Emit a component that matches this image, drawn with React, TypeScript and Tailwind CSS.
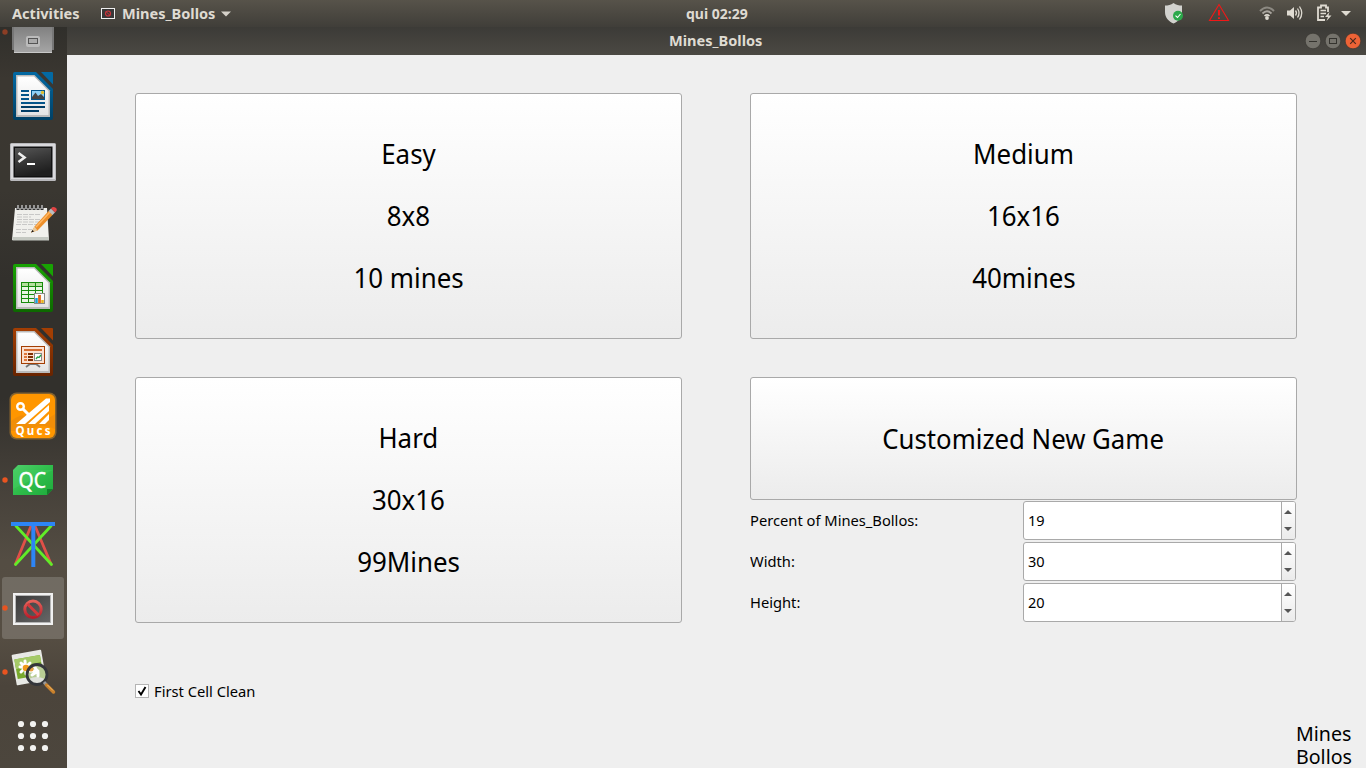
import type { ReactNode } from "react";

function DockItem({ top, label, running, active, children }: { top: number; label: string; running?: boolean; active?: boolean; children: ReactNode }) {
  return (
    <button aria-label={label} className="block h-16 w-[67px] shrink-0">
      <svg width="67" height="64" viewBox={`0 ${top} 67 64`}>
        {active && <rect x="2" y={top + 1} width="62" height="62" rx="3" fill="#fff" fillOpacity=".17" />}
        {running && <circle cx="5" cy={top + 32} r="2.7" fill="#e95420" />}
        {children}
      </svg>
    </button>
  );
}

function Sheet({ y, id, light, dark, children }: { y: number; id: string; light: string; dark: string; children: ReactNode }) {
  return (
    <g transform={`translate(0 ${y})`}>
      <defs>
        <linearGradient id={id} x1="0" y1="0" x2="0" y2="1">
          <stop offset="0" stopColor={light} />
          <stop offset="1" stopColor={dark} />
        </linearGradient>
        <linearGradient id={id + "p"} x1="0" y1="0" x2="0" y2="1">
          <stop offset="0" stopColor="#fff" />
          <stop offset="1" stopColor="#e4e4e4" />
        </linearGradient>
      </defs>
      <path d="M15 0H36L53 17V46Q53 48 51 48H15Q13 48 13 46V2Q13 0 15 0Z" fill={`url(#${id})`} />
      <path d="M16 3H34.5L50 18.5V45H16Z" fill="#bababa" />
      <path d="M17.5 4.5H34L48.500 19V43H17.500Z" fill={`url(#${id}p)`} />
      <path d="M41 0H52Q53 0 53 1V12.500Z" fill={light} />
      {children}
    </g>
  );
}

function Dock() {
  return (
    <nav className="flex h-[741px] w-[67px] shrink-0 flex-col justify-end overflow-hidden bg-[linear-gradient(180deg,#302f2b_0%,#3b3731_7%,#3a3731_22%,#32302c_34%,#32302c_50%,#46413a_62%,#544d43_72%,#564e43_82%,#4b443b_89%,#4c463d_100%)]">
      <DockItem top={0} label="Files">
        <defs>
          <linearGradient id="files" x1="0" y1="0" x2="0" y2="1"><stop stopColor="#777" /><stop offset="1" stopColor="#a5a5a5" /></linearGradient>
        </defs>
        <circle cx="5" cy="32" r="2.700" fill="#8c3e25" />
        <path d="M12 20H54V50H12Z" fill="#777" />
        <path d="M14 20H52V52.500H14Z" fill="url(#files)" />
        <path d="M14 52.500H52" stroke="#c9c9c9" />
        <rect x="26" y="36" width="14" height="11" rx="2" fill="#bbb" />
        <rect x="28.500" y="38.500" width="9" height="5" fill="#aaa" stroke="#555" />
      </DockItem>
      <DockItem top={64} label="Writer">
        <Sheet y={72} id="writer" light="#0369a3" dark="#004065">
          <path d="M21 19H29M21 23H29M21 27H29M21 31H45" stroke="#04558a" strokeWidth="2" />
          <path d="M21 35H45M21 39H39" stroke="#003d66" strokeWidth="2" />
          <rect x="31.500" y="18.500" width="13" height="9" fill="#8fd0f5" stroke="#04558a" />
          <path d="M32 27V25L35.500 20.500L38 24L41 22L44 25V27Z" fill="#444" />
          <circle cx="42.500" cy="20.500" r="1.700" fill="#e2bd2c" />
        </Sheet>
      </DockItem>
      <DockItem top={128} label="Terminal">
        <defs><linearGradient id="term" x1="0" y1="0" x2="0.300" y2="1"><stop stopColor="#555" /><stop offset=".5" stopColor="#383838" /><stop offset="1" stopColor="#1f1f1f" /></linearGradient></defs>
        <rect x="10" y="143" width="46" height="38" rx="1.500" fill="#b9b9bc" />
        <rect x="11" y="144" width="44" height="35" fill="#d9d9dc" />
        <rect x="13.500" y="146.500" width="39" height="31" fill="#111" />
        <rect x="15" y="148" width="36" height="28" fill="url(#term)" />
        <path d="M18.500 153L24.500 157.500L18.500 162" fill="none" stroke="#eee" strokeWidth="2.600" />
        <path d="M27 164H35" stroke="#fff" strokeWidth="2" />
      </DockItem>
      <DockItem top={192} label="Text Editor">
        <path d="M15 208H47L49 240H12Z" fill="#f0f0ec" />
        <path d="M12.500 237H49V240.500H12.500Z" fill="#c4c8c1" />
        <path d="M18 206V210M22 206V210M26 206V210M30 206V210M34 206V210M38 206V210M42 206V210" stroke="#333" strokeWidth="3" />
        <path d="M18 205V209M22 205V209M26 205V209M30 205V209M34 205V209M38 205V209M42 205V209" stroke="#ccc" strokeWidth="1.300" />
        <path d="M17 214.500H40M17 217H31M17 219.500H43M17 222H40M16 224.500H37M16 229.500H32M16 232.500H26" stroke="#c3c3c3" strokeWidth=".9" strokeDasharray="5 1" />
        <path d="M34.500 226.500L49 210.500L53 214.500L37.500 230.500L31 232.500Z" fill="#ed8f29" />
        <path d="M36 227L50 212" stroke="#ffb763" strokeWidth="1.500" />
        <path d="M31 232.500L34.500 226.500L37.500 230.500Z" fill="#e8ca9e" />
        <path d="M31 232.500L32.500 230L34 231.500Z" fill="#111" />
        <path d="M48.500 211L51 208.500L55 212.500L52.500 215Z" fill="#b9bdc0" />
        <path d="M51 208.500Q53 206 56 208Q58 210 55 212.500Z" fill="#e34444" />
      </DockItem>
      <DockItem top={256} label="Calc">
        <Sheet y={264} id="calc" light="#18a303" dark="#0d6800">
          <rect x="21" y="18" width="22" height="21" fill="#178b0c" />
          {[0, 1, 2, 3, 4].map((r) => [0, 1, 2].map((c) => <rect key={`${r}${c}`} x={22 + c * 7} y={19 + r * 4} width="6" height="3" fill={r ? "#e9f5e4" : "#b6df9f"} />))}
          <rect x="34.500" y="29.500" width="10" height="10" fill="#fafafa" stroke="#888" />
          <path d="M36.500 39V34" stroke="#18a0d8" strokeWidth="2.500" />
          <path d="M39.500 39V31" stroke="#e06a16" strokeWidth="2.800" />
          <path d="M42.500 39V36" stroke="#e6b51a" strokeWidth="2.500" />
        </Sheet>
      </DockItem>
      <DockItem top={320} label="Impress">
        <Sheet y={328} id="impress" light="#a33e03" dark="#692400">
          <path d="M26 39L30 36H36L40 39" fill="none" stroke="#777" strokeWidth="1.800" />
          <rect x="21.500" y="18.500" width="23" height="17" fill="#fbe0d0" stroke="#a33e03" />
          <path d="M24 22H42" stroke="#d56c30" strokeWidth="2" />
          <path d="M24 26H27M24 29H27M24 32H27" stroke="#df783c" strokeWidth="2" />
          <path d="M28 26H33M28 29H33M28 32H33" stroke="#812f03" strokeWidth="2" />
          <rect x="34.500" y="25.500" width="7" height="7" fill="#fff" stroke="#888" />
          <path d="M36 31L37.500 29L39 29.500L41 27" fill="none" stroke="#23a044" strokeWidth="1.300" />
        </Sheet>
      </DockItem>
      <DockItem top={384} label="Qucs">
        <rect x="9.500" y="392.500" width="47" height="47" rx="7" fill="#85632f" />
        <rect x="11" y="394" width="44" height="44" rx="6" fill="#ff9600" />
        <path d="M11 421Q23 411 30 419T55 414V429Q40 422 30 431H11Z" fill="#e98b0c" fillOpacity=".65" />
        <circle cx="20.500" cy="406.500" r="3.300" fill="none" stroke="#fff" strokeWidth="2.400" />
        <path d="M23 409L28.500 414.500" stroke="#fff" strokeWidth="3" />
        <path d="M16 424L46 398.500H50V402L25 424Z" fill="#fff" />
        <path d="M28 424L49 405V411L35 424ZM39 424L49 414V420L45 424Z" fill="#fff" />
        <text x="15.500" y="435" textLength="35" lengthAdjust="spacing" fill="#fff" className="font-['Noto_Sans'] text-[11.500px] font-bold">Qucs</text>
      </DockItem>
      <DockItem top={448} label="Qt Creator" running>
        <defs><linearGradient id="qc" x1="0" y1="0" x2="1" y2="1"><stop stopColor="#4fcf6b" /><stop offset=".5" stopColor="#2fbd4b" /><stop offset="1" stopColor="#1fab3c" /></linearGradient></defs>
        <path d="M18 465H53V489L47 495H13V470Z" fill="url(#qc)" />
        <path d="M13 470H53L13 489Z" fill="#45cf62" fillOpacity=".45" />
        <path d="M47 495V489H53Z" fill="#14802b" />
        <text x="18.500" y="487.500" textLength="27.500" lengthAdjust="spacingAndGlyphs" fill="#fff" stroke="#fff" strokeWidth=".4" className="font-['Noto_Sans'] text-[22px]">QC</text>
      </DockItem>
      <DockItem top={512} label="Kig">
        <path d="M31 526L15.500 564M35 526L51 564" stroke="#e05048" strokeWidth="2.800" strokeLinecap="round" />
        <path d="M16 526L51.500 564.500M51 526L15.500 564.500" stroke="#61ec28" strokeWidth="2.800" strokeLinecap="round" />
        <path d="M33.300 526V567" stroke="#2d85f5" strokeWidth="4" />
        <path d="M11 524H55" stroke="#2d85f5" strokeWidth="4.200" />
      </DockItem>
      <DockItem top={576} label="Mines_Bollos" running active>
        <BannedWindow />
      </DockItem>
      <DockItem top={640} label="Image Viewer" running>
        <g transform="rotate(-10 29 668)">
          <rect x="14" y="652" width="30" height="31" rx="1" fill="#e8e9e5" />
          <rect x="16" y="657" width="26" height="20" fill="#78a92c" />
          <path d="M16 657H42V664L16 667Z" fill="#a5ca68" />
        </g>
        <g stroke="#fff" strokeWidth="3" strokeLinecap="round"><path d="M20 667L31 668M21 672L30 663M25 661L26 674M21 663L30 672" /></g>
        <circle cx="26" cy="668" r="3.300" fill="#ef9a1c" />
        <circle cx="37" cy="674.500" r="10" fill="#b8cd95" />
        <path d="M29 679Q36 675 45 679Q41 684 36 684Q31 683 29 679Z" fill="#dfe1dc" />
        <path d="M30 671L37 671M34 666L38 672M32 675L38 671M38 676V672" stroke="#fff" strokeWidth="3" strokeLinecap="round" />
        <circle cx="31" cy="669" r="2.500" fill="#e9a243" />
        <circle cx="37" cy="674.500" r="10" fill="none" stroke="#34363b" strokeWidth="2.800" />
        <path d="M44 682L46.500 685" stroke="#999" strokeWidth="3" />
        <path d="M46.500 685L53.500 692" stroke="#c9812c" strokeWidth="3.500" strokeLinecap="round" />
        <path d="M47.500 685L53 690.500" stroke="#f5bc67" strokeWidth="1" />
      </DockItem>
      <DockItem top={704} label="Show Applications">
        {[724, 736, 748].map((y) => [21, 33, 45].map((x) => <circle key={`${x}-${y}`} cx={x} cy={y} r="3.100" fill="#f2f2f0" />))}
      </DockItem>
    </nav>
  );
}

function BannedWindow() {
  return (
    <>
      <defs>
        <linearGradient id="screen" x1="0" y1="0" x2="1" y2="1"><stop stopColor="#3b3b3b" /><stop offset="1" stopColor="#666" /></linearGradient>
        <linearGradient id="ban" x1="0" y1="0" x2="0" y2="1"><stop stopColor="#e5625a" /><stop offset="1" stopColor="#b81e2b" /></linearGradient>
      </defs>
      <rect x="13" y="593" width="40" height="32" fill="#f1f1f1" />
      <rect x="15" y="595" width="36" height="28" fill="#b5b5b5" />
      <rect x="16" y="596" width="34" height="26" fill="url(#screen)" />
      <circle cx="33" cy="609.300" r="8.200" fill="none" stroke="url(#ban)" strokeWidth="3" />
      <path d="M27.500 604L38.500 615" stroke="#d43a3c" strokeWidth="3" />
    </>
  );
}

function TopBar() {
  return (
    <header className="flex h-[27px] items-center bg-linear-to-b from-[#57534a] to-[#403e39] text-[14px] font-bold text-[#dfdbd2]">
      <div className="w-[101px] pl-3"><span className="inline-block origin-left scale-x-[1.04]">Activities</span></div>
      <svg width="15" height="12" viewBox="0 0 15 12"><rect x=".5" y=".5" width="13" height="10" fill="#383838" stroke="#eee" /><circle cx="7" cy="5.500" r="2.500" fill="none" stroke="#cf343b" strokeWidth="1.200" /><path d="M5 3.500L9 7.500" stroke="#cf343b" /></svg>
      <div className="w-[105px] pl-[6px]"><span className="inline-block origin-left scale-x-[1.04]">Mines_Bollos</span></div>
      <svg width="10" height="6" viewBox="0 0 10 6"><path d="M0 .5H10L5 5.500Z" fill="#d5d1c9" /></svg>
      <div className="flex flex-1 pb-px pl-[455px]"><span className="inline-block origin-left whitespace-nowrap">qui 02:29</span></div>
      <svg width="201" height="27" viewBox="1165 0 201 27" className="shrink-0">
        <path d="M1173.500 3C1176 5 1179 5.500 1182 5.500V12C1182 18 1178 21.500 1173.500 23.500C1169 21.500 1165 18 1165 12V5.500C1168 5.500 1171 5 1173.500 3Z" fill="#d2d2ce" />
        <circle cx="1178" cy="15.700" r="5" fill="#2ba84a" />
        <path d="M1175.500 15.700L1177.500 17.500L1180.500 14" fill="none" stroke="#fff" strokeWidth="1.100" />
        <path d="M1219 4.500L1228.500 20.500H1209.500Z" fill="none" stroke="#f01818" strokeWidth="1.100" />
        <path d="M1219 10V15.500M1219 17.200V19" stroke="#f01818" strokeWidth="2" />
        <path d="M1260 11Q1267 4 1274 11" fill="none" stroke="#8c8982" strokeWidth="2" />
        <path d="M1262.500 13.500Q1267 9 1271.500 13.500" fill="none" stroke="#aaa69f" strokeWidth="1.800" />
        <path d="M1264.500 16Q1267 13.700 1269.500 16" fill="none" stroke="#dfdbd2" strokeWidth="1.500" />
        <circle cx="1267" cy="18" r="1.900" fill="#dfdbd2" />
        <path d="M1287 10.500H1290L1294 7V19L1290 15.500H1287Z" fill="#dfdbd2" />
        <path d="M1295.500 10.500Q1297.500 13 1295.500 15.500M1297.500 8.500Q1300.500 13 1297.500 17.500M1299.500 6.500Q1304 13 1299.500 19.500" fill="none" stroke="#dfdbd2" strokeWidth="1.300" />
        <path d="M1328 12V7.500H1326V5.500H1321V7.500H1318V20H1325" fill="none" stroke="#dfdbd2" strokeWidth="1.800" />
        <path d="M1320.500 10.500H1326M1320.500 13.500H1326M1320.500 16.500H1324" stroke="#dfdbd2" strokeWidth="1.500" />
        <path d="M1329.500 12L1325 17H1328L1326.500 21L1331.500 15.500H1328.500Z" fill="#dfdbd2" />
        <path d="M1341 11H1351L1346 16Z" fill="#dfdbd2" />
      </svg>
    </header>
  );
}

function TitleBar() {
  return (
    <div className="flex h-7 items-center bg-linear-to-b from-[#3c3b37] to-[#4b4943] text-[14px] font-bold text-[#dfdbd2]">
      <div className="flex-1 pb-0.5 pl-[602px]"><span className="inline-block origin-left scale-x-[1.04]">Mines_Bollos</span></div>
      <svg width="61" height="28" viewBox="1305 27 61 28">
        <circle cx="1313" cy="41" r="7.800" fill="#75736c" stroke="#34332e" strokeWidth=".6" />
        <circle cx="1333" cy="41" r="7.800" fill="#75736c" stroke="#34332e" strokeWidth=".6" />
        <circle cx="1353" cy="41" r="7.800" fill="#ee6336" stroke="#34332e" strokeWidth=".6" />
        <path d="M1309 41.500H1317" stroke="#34332e" />
        <rect x="1329.500" y="38.500" width="7" height="5" fill="none" stroke="#34332e" />
        <path d="M1350.200 38.200L1355.800 43.800M1355.800 38.200L1350.200 43.800" stroke="#4a291d" strokeWidth="1.200" />
      </svg>
    </div>
  );
}

const face = "w-[547px] rounded-[3px] border border-[#a9a9a9] bg-linear-to-b from-white to-[#ececec] text-[28px] leading-[31px] text-black";

function LevelButton({ lines }: { lines: string[] }) {
  return (
    <button className={`${face} flex h-[246px] flex-col items-center gap-[31px] pt-[44px]`}>
      {lines.map((line) => <span key={line} className="scale-x-[0.925] whitespace-nowrap">{line}</span>)}
    </button>
  );
}

function SpinRow({ label, value }: { label: string; value: number }) {
  return (
    <div className="flex h-[39px] w-[546px] items-center justify-between text-[15px] leading-5">
      <span className="origin-left scale-x-[0.98] pb-0.5">{label}</span>
      <div className="flex h-[39px] w-[273px] overflow-hidden rounded-[3px] border border-[#a9a9a9] bg-white">
        <div className="flex flex-1 items-center pb-0.5 pl-1"><span className="origin-left scale-x-[0.97]">{value}</span></div>
        <div className="flex w-[14px] flex-col items-start justify-center gap-[13px] border-l border-[#a9a9a9] bg-linear-to-b from-white to-[#ebebeb] pb-px pl-0.5">
          <svg width="8" height="4" viewBox="0 0 8 4"><path d="M0 4L4 0L8 4Z" fill="#555" /></svg>
          <svg width="8" height="4" viewBox="0 0 8 4"><path d="M0 0H8L4 4Z" fill="#555" /></svg>
        </div>
      </div>
    </div>
  );
}

export default function App() {
  return (
    <div className="flex h-[768px] w-[1366px] flex-col overflow-hidden bg-[#efefef] font-['Noto_Sans',sans-serif] text-black">
      <TopBar />
      <div className="flex flex-1">
        <Dock />
        <div className="flex flex-1 flex-col">
          <TitleBar />
          <main className="flex flex-1 flex-col pt-[38px] pl-[68px]">
            <div className="grid grid-cols-[547px_547px] gap-x-[68px] gap-y-[38px]">
              <LevelButton lines={["Easy", "8x8", "10 mines"]} />
              <LevelButton lines={["Medium", "16x16", "40mines"]} />
              <LevelButton lines={["Hard", "30x16", "99Mines"]} />
              <div className="flex flex-col">
                <button className={`${face} mb-px flex h-[123px] items-center justify-center`}>
                  <span className="scale-x-[0.92] whitespace-nowrap">Customized New Game</span>
                </button>
                <div className="flex flex-col gap-0.5">
                  <SpinRow label="Percent of Mines_Bollos:" value={19} />
                  <SpinRow label="Width:" value={30} />
                  <SpinRow label="Height:" value={20} />
                </div>
              </div>
            </div>
            <label className="mt-[58px] flex h-5 items-center text-[15px] leading-5">
              <svg width="14" height="14" viewBox="0 0 14 14" className="mr-[5px]"><rect x=".5" y=".5" width="13" height="13" fill="#fff" stroke="#b4b4b4" /><path d="M3.500 7L6 10.500L10.500 3" fill="none" stroke="#000" strokeWidth="1.900" /></svg>
              <span className="origin-left scale-x-[0.98]">First Cell Clean</span>
            </label>
            <div className="mt-auto pl-[1161px] text-[20px] leading-[23px]">
              <p className="w-[68px] origin-left scale-x-[0.98]">Mines Bollos</p>
            </div>
          </main>
        </div>
      </div>
    </div>
  );
}
